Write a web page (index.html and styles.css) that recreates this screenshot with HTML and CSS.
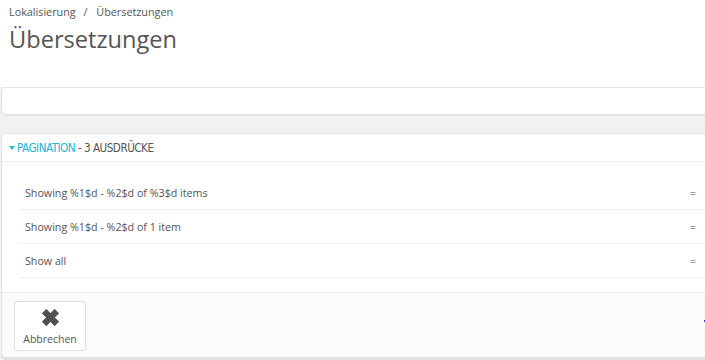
FILE: index.html
```html
<!DOCTYPE html>
<html lang="de">
<head>
<meta charset="utf-8">
<link rel="stylesheet" href="styles.css">
</head>
<body>
<div class="page-head">
  <div class="breadcrumb">Lokalisierung <span class="sep">/</span> Übersetzungen</div>
  <h1 class="title">Übersetzungen</h1>
</div>
<div class="content">
  <div class="panel panel-top"></div>
  <div class="panel panel-main">
    <div class="panel-heading">
      <span class="caret"></span><span class="group">PAGINATION</span><span class="count"> - 3 AUSDRÜCKE</span>
    </div>
    <div class="rows">
      <div class="row"><span class="label">Showing %1$d - %2$d of %3$d items</span><span class="eq">=</span></div>
      <div class="row"><span class="label">Showing %1$d - %2$d of 1 item</span><span class="eq">=</span></div>
      <div class="row"><span class="label">Show all</span><span class="eq">=</span></div>
    </div>
    <div class="panel-footer">
      <button class="btn-cancel">
        <svg class="icon-x" viewBox="0 0 20 20" width="21" height="21"><path d="M2.5 6 L6 2.5 L10 6.5 L14 2.5 L17.5 6 L13.5 10 L17.5 14 L14 17.5 L10 13.5 L6 17.5 L2.5 14 L6.5 10 Z" fill="#505050" stroke="#505050" stroke-width="1" stroke-linejoin="round"/></svg>
        <span>Abbrechen</span>
      </button>
      <span class="dot"></span>
    </div>
  </div>
</div>
</body>
</html>
```
FILE: styles.css
```css
html, body {
  margin: 0;
  padding: 0;
}
body {
  background: #eff1f2;
  font-family: "Open Sans", "Liberation Sans", sans-serif;
  color: #555;
  width: 705px;
  height: 360px;
  overflow: hidden;
}
.page-head {
  background: #fff;
  height: 87px;
  padding: 0 0 0 9px;
  box-sizing: border-box;
}
.breadcrumb {
  font-size: 10.8px;
  line-height: 16px;
  padding-top: 4px;
  color: #555;
}
.breadcrumb .sep {
  margin: 0 6px 0 5px;
}
.title {
  margin: 2px 0 0 0;
  font-weight: 400;
  font-size: 23.6px;
  line-height: 34px;
  color: #555;
}
.content {
  padding-left: 1px;
}
.panel {
  background: #fff;
  border: 1px solid #e1e3e4;
  border-radius: 5px;
  width: 720px;
  box-sizing: border-box;
}
.panel-top {
  height: 28px;
  margin-bottom: 18px;
  border-top-color: #e6e6e6;
  box-shadow: 0 1px 0 #e0e2e3;
}
.panel-main {
  height: 225px;
  display: flex;
  flex-direction: column;
  box-shadow: 0 2px 0 #dfe1e2;
}
.panel-heading {
  height: 27px;
  border-bottom: 1px solid #eeeeee;
  margin: 0 -1px 0 0;
  padding-left: 7px;
  display: flex;
  align-items: center;
  font-family: "DejaVu Sans Condensed", "DejaVu Sans", sans-serif;
  font-stretch: condensed;
  font-size: 11.6px;
  letter-spacing: -0.5px;
  text-transform: uppercase;
}
.caret {
  width: 0;
  height: 0;
  border-left: 3.5px solid transparent;
  border-right: 3.5px solid transparent;
  border-top: 4px solid #25b9d7;
  margin-right: 2px;
}
.group {
  color: #25b3d6;
}
.count {
  color: #555;
  white-space: pre;
}
.rows {
  padding: 14px 0 14px 17px;
}
.row {
  height: 33px;
  border-bottom: 1px solid #eeeeee;
  display: flex;
  align-items: center;
  justify-content: space-between;
  padding: 0 24px 0 6px;
  font-size: 10.7px;
}
.eq {
  font-size: 11px;
  color: #555;
}
.panel-footer {
  flex: 1;
  background: #fafbfc;
  border-top: 1px solid #eeeeee;
  border-radius: 0 0 5px 5px;
  padding: 8px 0 0 12px;
  position: relative;
}
.btn-cancel {
  width: 72px;
  height: 50px;
  background: #fff;
  border: 1px solid #dddddd;
  border-radius: 3px;
  display: flex;
  flex-direction: column;
  align-items: center;
  justify-content: flex-start;
  padding: 5px 0 0 0;
  box-sizing: border-box;
  font-family: "Open Sans", "Liberation Sans", sans-serif;
  font-size: 10.5px;
  color: #555;
}
.icon-x {
  display: block;
  margin-bottom: 4px;
}
.dot {
  position: absolute;
  left: 702px;
  top: 27px;
  width: 2px;
  height: 2px;
  background: #1a3fd8;
}
```
